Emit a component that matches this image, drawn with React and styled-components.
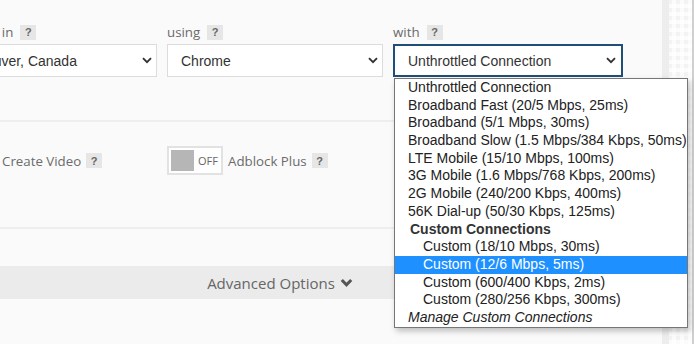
import React from 'react';
import styled, { createGlobalStyle } from 'styled-components';

const GlobalStyle = createGlobalStyle`
  html, body {
    margin: 0;
    padding: 0;
    overflow: hidden;
  }
  body {
    width: 694px;
    height: 344px;
    background-color: #f3f3f3;
    background-image:
      linear-gradient(90deg, rgba(255,255,255,0.7) 50%, transparent 50%),
      linear-gradient(0deg, rgba(255,255,255,0.7) 50%, transparent 50%);
    background-size: 8px 8px;
  }
`;

const Page = styled.div`
  display: flex;
  height: 344px;
`;

const Panel = styled.div`
  flex: none;
  width: 764px;
  margin-left: -102px;
  height: 100%;
  background: #fafafa;
  box-shadow: 7px 0 0 #ededed;
  font-family: "Open Sans", "Liberation Sans", sans-serif;
`;

const Section = styled.div`
  display: grid;
  grid-template-columns: 216px 216px 230px;
  column-gap: 10px;
  padding: ${({ $pad }) => $pad};
  padding-left: 43px;
  border-bottom: 2px solid #eeeeee;
`;

const Field = styled.div`
  position: relative;
  display: flex;
  flex-direction: column;
`;

const Label = styled.div`
  display: flex;
  align-items: center;
  gap: 7px;
  height: 20px;
  margin-bottom: 2px;
  font-size: 13.3px;
  color: #6b6b6b;
  white-space: nowrap;
`;

const Help = styled.span`
  display: inline-flex;
  align-items: center;
  justify-content: center;
  width: 16px;
  height: 15px;
  background: #e6e6e6;
  color: #666;
  font-family: "Liberation Sans", Arial, sans-serif;
  font-size: 11px;
  font-weight: bold;
`;

const SelectBox = styled.div`
  box-sizing: border-box;
  display: flex;
  align-items: center;
  justify-content: space-between;
  height: 33px;
  padding: 0 ${({ $focus }) => ($focus ? '5px' : '4px')} 0 13px;
  background: #fff;
  border: ${({ $focus }) => ($focus ? '2px solid #1f4f78' : '1px solid #dcdcdc')};
  font-family: "Liberation Sans", Arial, sans-serif;
  font-size: 14px;
  color: #333;
  white-space: nowrap;
  overflow: hidden;
`;

const Chevron = () => (
  <svg width="10" height="7" viewBox="0 0 10 7" style={{ flex: 'none' }}>
    <polyline points="1,1.2 5,5.2 9,1.2" fill="none" stroke="#333" strokeWidth="1.9" />
  </svg>
);

const Menu = styled.div`
  position: absolute;
  top: calc(100% + 1px);
  left: 1px;
  width: 294px;
  box-sizing: border-box;
  background: #fff;
  border: 1px solid #767676;
  box-shadow: 2px 3px 6px rgba(0, 0, 0, 0.25);
  font-family: "Liberation Sans", Arial, sans-serif;
  font-size: 14px;
  color: #222;
  z-index: 5;
`;

const Option = styled.div`
  height: 17.7px;
  line-height: 16px;
  padding-left: ${({ $indent }) => ($indent ? '28px' : '13px')};
  white-space: nowrap;
  background: ${({ $active }) => ($active ? '#1e90ff' : 'transparent')};
  color: ${({ $active }) => ($active ? '#fff' : 'inherit')};
  font-weight: ${({ $group }) => ($group ? 'bold' : 'normal')};
  font-style: ${({ $italic }) => ($italic ? 'italic' : 'normal')};
  ${({ $group }) => $group && 'padding-left: 15px; color: #333;'}
`;

const ToggleRow = styled.div`
  display: flex;
  align-items: center;
  gap: 5px;
  font-size: 13.3px;
  color: #6b6b6b;
`;

const Toggle = styled.div`
  box-sizing: border-box;
  display: flex;
  align-items: center;
  gap: 4px;
  width: 56px;
  height: 29px;
  padding: 2px;
  border: 2px solid #e2e2e2;
  background: #fff;
  font-size: 11px;
  color: #666;
`;

const Knob = styled.span`
  width: 23px;
  height: 21px;
  background: #b6b6b6;
`;

const AdvancedBar = styled.div`
  display: flex;
  align-items: center;
  justify-content: center;
  gap: 5px;
  height: 33px;
  margin-top: 37px;
  background: #ebebeb;
  font-size: 15px;
  color: #666;
`;

const Side = styled.div`
  flex: 1;
  margin-left: 7px;
  border-right: 2px solid #cfcfcf;
`;

const options = [
  { t: 'Unthrottled Connection' },
  { t: 'Broadband Fast (20/5 Mbps, 25ms)' },
  { t: 'Broadband (5/1 Mbps, 30ms)' },
  { t: 'Broadband Slow (1.5 Mbps/384 Kbps, 50ms)' },
  { t: 'LTE Mobile (15/10 Mbps, 100ms)' },
  { t: '3G Mobile (1.6 Mbps/768 Kbps, 200ms)' },
  { t: '2G Mobile (240/200 Kbps, 400ms)' },
  { t: '56K Dial-up (50/30 Kbps, 125ms)' },
  { t: 'Custom Connections', group: true },
  { t: 'Custom (18/10 Mbps, 30ms)', indent: true },
  { t: 'Custom (12/6 Mbps, 5ms)', indent: true, active: true },
  { t: 'Custom (600/400 Kbps, 2ms)', indent: true },
  { t: 'Custom (280/256 Kbps, 300ms)', indent: true },
  { t: 'Manage Custom Connections', italic: true },
];

export default function App() {
  return (
    <>
      <GlobalStyle />
      <Page>
        <Panel>
          <Section $pad="22px 0 43px">
            <Field>
              <Label>Test runs in <Help>?</Help></Label>
              <SelectBox>
                <span>Vancouver, Canada</span>
                <Chevron />
              </SelectBox>
            </Field>
            <Field>
              <Label>using <Help>?</Help></Label>
              <SelectBox>
                <span>Chrome</span>
                <Chevron />
              </SelectBox>
            </Field>
            <Field>
              <Label>with <Help>?</Help></Label>
              <SelectBox $focus>
                <span>Unthrottled Connection</span>
                <Chevron />
              </SelectBox>
              <Menu>
                {options.map((o) => (
                  <Option key={o.t} $indent={o.indent} $active={o.active} $group={o.group} $italic={o.italic}>
                    {o.t}
                  </Option>
                ))}
              </Menu>
            </Field>
          </Section>
          <Section $pad="24px 0 52px">
            <ToggleRow>
              <Toggle><Knob />OFF</Toggle>
              Create Video
              <Help>?</Help>
            </ToggleRow>
            <ToggleRow>
              <Toggle><Knob />OFF</Toggle>
              Adblock Plus
              <Help>?</Help>
            </ToggleRow>
          </Section>
          <AdvancedBar>
            Advanced Options
            <svg width="13" height="10" viewBox="0 0 13 10">
              <polyline points="1.8,2 6.5,6.8 11.2,2" fill="none" stroke="#555" strokeWidth="3" />
            </svg>
          </AdvancedBar>
        </Panel>
        <Side />
      </Page>
    </>
  );
}
